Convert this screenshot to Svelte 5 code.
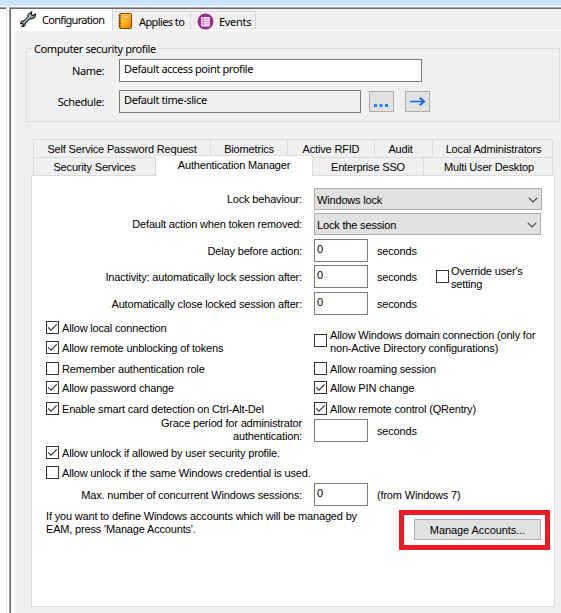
<script lang="ts">
  interface Check {
    label: string;
    checked: boolean;
    cls: string;
  }

  interface Delay {
    label: string;
    value: string;
    cls: string;
  }

  const upperTabs = [
    { label: 'Self Service Password Request', cls: 'self-service' },
    { label: 'Biometrics', cls: 'biometrics' },
    { label: 'Active RFID', cls: 'rfid' },
    { label: 'Audit', cls: 'audit' },
    { label: 'Local Administrators', cls: 'local-admin' }
  ];

  const lowerTabs = [
    { label: 'Security Services', cls: 'security' },
    { label: 'Authentication Manager', cls: 'active' },
    { label: 'Enterprise SSO', cls: 'sso' },
    { label: 'Multi User Desktop', cls: 'desktop' }
  ];

  const selects = [
    { label: 'Lock behaviour:', value: 'Windows lock', cls: 'behaviour' },
    { label: 'Default action when token removed:', value: 'Lock the session', cls: 'removed' }
  ];

  let delays: Delay[] = $state([
    { label: 'Delay before action:', value: '0', cls: 'delay' },
    { label: 'Inactivity: automatically lock session after:', value: '0', cls: 'inactivity' },
    { label: 'Automatically close locked session after:', value: '0', cls: 'close' }
  ]);

  let leftChecks: Check[] = $state([
    { label: 'Allow local connection', checked: true, cls: 'local' },
    { label: 'Allow remote unblocking of tokens', checked: true, cls: 'unblock' },
    { label: 'Remember authentication role', checked: false, cls: 'role' },
    { label: 'Allow password change', checked: true, cls: 'password' },
    { label: 'Enable smart card detection on Ctrl-Alt-Del', checked: true, cls: 'smart' }
  ]);

  let rightChecks: Check[] = $state([
    { label: 'Allow Windows domain connection (only for\nnon-Active Directory configurations)', checked: false, cls: 'domain' },
    { label: 'Allow roaming session', checked: false, cls: 'roaming' },
    { label: 'Allow PIN change', checked: true, cls: 'pin' },
    { label: 'Allow remote control (QRentry)', checked: true, cls: 'remote' }
  ]);

  let unlockChecks: Check[] = $state([
    { label: 'Allow unlock if allowed by user security profile.', checked: true, cls: 'by-profile' },
    { label: 'Allow unlock if the same Windows credential is used.', checked: false, cls: 'by-credential' }
  ]);

  let override: Check = $state({ label: "Override user's\nsetting", checked: false, cls: 'override' });
</script>

{#snippet checkbox(item: Check)}
  <button class="check {item.cls}" role="checkbox" aria-checked={item.checked} onclick={() => (item.checked = !item.checked)}>
    <svg class="box" width="13" height="13" viewBox="0 0 13 13">
      <rect x="0.5" y="0.5" width="12" height="12" fill="#fff" stroke="#333" />
      {#if item.checked}
        <path d="M2.2 6.3 L5 9.1 L10.8 3.3" fill="none" stroke="#333" stroke-width="1.2" />
      {/if}
    </svg>
    <span class="check-label">{item.label}</span>
  </button>
{/snippet}

<div class="window">
  <div class="side"></div>
  <main class="pane">
    <nav class="main-tabs">
      <div class="main-tab current">
        <svg class="wrench" width="17" height="17" viewBox="0 0 17 17">
          <path d="M9.3 2.6 L11.6 0.8 L11.2 3.6 L12.8 4.6 L15.4 3 C15.9 5.7 14 8 11.3 7.6 L9.6 7.8 L5.2 12.3 C5.4 14.3 3.7 15.8 1.9 15.4 L3.4 13.5 L2.6 12.3 L0.6 12.6 C0.8 10.5 2.4 9.5 4 9.9 L8 6.2 C7.6 4.7 8 3.4 9.3 2.6 Z" fill="#8fa3ad" stroke="#20272b" stroke-width="1.2" />
          <path d="M4.2 11.2 L9.4 6 M9.8 3.6 L9.6 5.6" stroke="#e4edf1" stroke-width="1" />
        </svg>
        <span>Configuration</span>
      </div>
      <div class="main-tab applies">
        <svg width="14" height="16" viewBox="0 0 14 16">
          <defs>
            <linearGradient id="cover" x1="0" y1="0" x2="1" y2="1">
              <stop offset="0" stop-color="#ffe05a" />
              <stop offset="0.5" stop-color="#ffb81c" />
              <stop offset="1" stop-color="#ee7200" />
            </linearGradient>
          </defs>
          <rect x="1.5" y="0.5" width="12" height="15" rx="1" fill="url(#cover)" stroke="#8a3d00" />
          <rect x="5" y="3" width="6" height="2" fill="#fff8d8" stroke="#d48a1a" stroke-width="0.8" />
          <path d="M2.8 1 V15" stroke="#c86400" stroke-width="0.8" />
          <path d="M0.4 2.5 H3 M0.4 5.2 H3 M0.4 7.9 H3 M0.4 10.6 H3 M0.4 13.3 H3" stroke="#6b6257" stroke-width="1" />
        </svg>
        <span>Applies to</span>
      </div>
      <div class="main-tab events">
        <svg width="17" height="17" viewBox="0 0 17 17">
          <circle cx="8.5" cy="8.5" r="8" fill="#9b2d8d" />
          <rect x="4" y="4" width="9" height="9.4" rx="0.8" fill="#f7e6f5" />
          <path d="M4 6.3 H13 M4 8.6 H13 M4 10.9 H13" stroke="#c07ab6" stroke-width="0.8" />
          <path d="M6.3 4 V13" stroke="#c07ab6" stroke-width="0.8" />
        </svg>
        <span>Events</span>
      </div>
    </nav>

    <div class="page">
      <fieldset class="profile">
        <legend>Computer security profile</legend>
        <div class="profile-row">
          <label for="name">Name:</label>
          <input id="name" value="Default access point profile" />
        </div>
        <div class="profile-row">
          <label for="schedule">Schedule:</label>
          <input id="schedule" class="readonly" value="Default time-slice" readonly />
          <button class="tool" aria-label="Browse">
            <svg width="23" height="19" viewBox="0 0 23 19">
              <path d="M4 13.5 H7 M9.5 13.5 H12.5 M15 13.5 H18" stroke="#1a82ff" stroke-width="3" />
            </svg>
          </button>
          <button class="tool" aria-label="Go to">
            <svg width="23" height="19" viewBox="0 0 23 19">
              <path d="M4 9.5 H17" stroke="#0f62ff" stroke-width="1.5" />
              <path d="M13.8 5.8 L18 9.5 L13.8 13.2" fill="none" stroke="#0f62ff" stroke-width="2" />
            </svg>
          </button>
        </div>
      </fieldset>

      <div class="tab-row upper">
        {#each upperTabs as tab}
          <div class="tab {tab.cls}"><span>{tab.label}</span></div>
        {/each}
      </div>
      <div class="tab-row lower">
        {#each lowerTabs as tab}
          <div class="tab {tab.cls}"><span>{tab.label}</span></div>
        {/each}
      </div>

      <section class="panel">
        {#each selects as item}
          <div class="row {item.cls}">
            <span class="label">{item.label}</span>
            <div class="select">
              <span>{item.value}</span>
              <svg width="10" height="6" viewBox="0 0 10 6">
                <path d="M0.8 0.8 L5 5 L9.2 0.8" fill="none" stroke="#444" stroke-width="1.2" />
              </svg>
            </div>
          </div>
        {/each}

        {#each delays as item}
          <div class="row {item.cls}">
            <span class="label">{item.label}</span>
            <input class="number" bind:value={item.value} />
            <span class="unit">seconds</span>
            {#if item.cls === 'inactivity'}
              {@render checkbox(override)}
            {/if}
          </div>
        {/each}

        <div class="checks">
          <div class="column">
            {#each leftChecks as item}
              {@render checkbox(item)}
            {/each}
          </div>
          <div class="column">
            {#each rightChecks as item}
              {@render checkbox(item)}
            {/each}
          </div>
        </div>

        <div class="row grace">
          <span class="label">Grace period for administrator<br />authentication:</span>
          <input class="number" value="" />
          <span class="unit">seconds</span>
        </div>

        <div class="column unlocks">
          {#each unlockChecks as item}
            {@render checkbox(item)}
          {/each}
        </div>

        <div class="row sessions">
          <span class="label">Max. number of concurrent Windows sessions:</span>
          <input class="number" value="0" />
          <span class="unit windows">(from Windows 7)</span>
        </div>

        <div class="footer">
          <p>If you want to define Windows accounts which will be managed by<br />EAM, press 'Manage Accounts'.</p>
          <div class="highlight">
            <button class="manage">Manage Accounts...</button>
          </div>
        </div>
      </section>
    </div>
  </main>
</div>

<style>
  :global(body) {
    background: #fff;
    overflow: hidden;
  }

  * {
    box-sizing: border-box;
  }

  .window {
    display: flex;
    width: 561px;
    height: 613px;
    border-top: 6px solid #cce4ff;
    font-family: "Liberation Sans", Arial, sans-serif;
    font-size: 11px;
    line-height: 13px;
    letter-spacing: -0.17px;
    color: #000;
    white-space: nowrap;
  }

  button {
    font: inherit;
    letter-spacing: inherit;
    color: inherit;
  }

  input {
    display: block;
    margin: 0;
    border: 1px solid #7a7a7a;
    background: #fff;
    font: inherit;
    letter-spacing: inherit;
    color: inherit;
    outline: none;
  }

  .side {
    width: 7px;
    margin: 1px 2px 0 0;
    border-top: 1px solid #a0a0a0;
    border-right: 1px solid #e3e3e3;
    box-shadow: inset 0 1px 0 #696969;
  }

  .pane {
    flex: 1;
    margin-top: 1px;
    padding: 1px 0 0 1px;
    border-top: 1px solid #a0a0a0;
    border-left: 1px solid #a0a0a0;
    background: #f0f0f0;
    box-shadow: inset 1px 1px 0 #696969, inset 3px 0 0 #fff;
  }

  .main-tabs {
    display: flex;
    align-items: flex-end;
    height: 21px;
    margin-left: 2px;
    font-family: "Noto Sans", "Open Sans", sans-serif;
    letter-spacing: -0.3px;
  }

  .main-tab {
    display: flex;
    align-items: center;
    height: 19px;
    border: 1px solid #d9d9d9;
    border-width: 1px 1px 0 0;
    background: #f0f0f0;
  }

  .current {
    width: 100px;
    height: 21px;
    padding: 0 0 0 7px;
    gap: 5px;
    border: 0;
    border-right: 1px solid #d9d9d9;
    background: #fff;
    letter-spacing: -0.7px;
  }

  .applies {
    width: 78px;
    padding-left: 5px;
    gap: 7px;
    letter-spacing: -0.6px;
  }

  .events {
    width: 65px;
    padding-left: 6px;
    gap: 5px;
  }

  .page {
    height: 583px;
    margin-left: 2px;
    padding: 11px 0 0 13px;
    border-top: 1px solid #fff;
    border-left: 2px solid #fff;
  }

  .profile {
    width: 534px;
    height: 80px;
    margin: 0 0 17px -2px;
    padding: 4px 0 0;
    border: 1px solid #dcdcdc;
    font-family: "Noto Sans", "Open Sans", sans-serif;
    letter-spacing: -0.4px;
  }

  legend {
    height: 13px;
    margin-left: 5px;
    padding: 0 2px;
  }

  .profile-row {
    display: flex;
    align-items: center;
    height: 23px;
    margin-bottom: 8px;
  }

  .profile-row label {
    width: 77px;
    margin-right: 15px;
    text-align: right;
  }

  .profile-row input {
    width: 303px;
    height: 23px;
    padding: 0 4px 4px;
  }

  .profile-row .readonly {
    width: 242px;
    margin-right: 8px;
    background: #f0f0f0;
  }

  .tool {
    display: block;
    width: 25px;
    height: 21px;
    margin-right: 11px;
    padding: 0;
    border: 1px solid #adadad;
    background: #e1e1e1;
  }

  .tool svg {
    display: block;
  }

  .tab-row {
    display: flex;
    width: 520px;
    height: 18px;
    margin-left: 5px;
    border-left: 1px solid #dcdcdc;
  }

  .tab {
    height: 18px;
    padding-top: 3px;
    border: 1px solid #dcdcdc;
    border-width: 1px 1px 0 0;
    text-align: center;
  }

  .self-service {
    width: 177px;
  }

  .biometrics {
    width: 77px;
  }

  .rfid {
    width: 87px;
  }

  .audit {
    width: 58px;
    padding-right: 6px;
  }

  .local-admin {
    width: 120px;
    padding-left: 2px;
  }

  .security {
    width: 122px;
  }

  .active {
    position: relative;
    width: 157px;
    height: 21px;
    margin-top: -2px;
    background: #fff;
  }

  .sso {
    width: 111px;
  }

  .desktop {
    width: 129px;
    padding-left: 2px;
  }

  .panel {
    width: 524px;
    height: 432px;
    margin-left: 3px;
    padding: 12px 0 0 14px;
    border: 1px solid #dcdcdc;
    background: #fff;
  }

  .row {
    display: flex;
    align-items: center;
    height: 23px;
  }

  .label {
    width: 256px;
    margin-right: 12px;
    padding-top: 1px;
    text-align: right;
  }

  .behaviour,
  .removed {
    height: 22px;
  }

  .behaviour,
  .delay {
    margin-bottom: 3px;
  }

  .removed,
  .inactivity {
    margin-bottom: 4px;
  }

  .close {
    margin-bottom: 6px;
  }

  .grace .label {
    margin-top: -2px;
  }

  .select {
    display: flex;
    align-items: center;
    justify-content: space-between;
    width: 227px;
    height: 22px;
    padding: 2px 3px 0 2px;
    border: 1px solid #adadad;
    background: #e1e1e1;
  }

  .behaviour .select {
    width: 228px;
  }

  .number {
    width: 54px;
    height: 23px;
    padding: 0 2px 3px;
  }

  .unit {
    width: 59px;
    margin-left: 9px;
    padding-top: 1px;
  }

  .check {
    display: flex;
    align-items: center;
    height: 13px;
    padding: 0;
    border: 0;
    background: none;
    text-align: left;
    white-space: pre;
  }

  .check-label {
    padding-top: 2px;
  }

  .box {
    display: block;
    flex: none;
    margin-right: 3px;
  }

  .override .box {
    margin-right: 2px;
  }

  .checks {
    display: flex;
    height: 98px;
  }

  .column {
    display: flex;
    flex: none;
    flex-direction: column;
    align-items: flex-start;
    width: 268px;
  }

  .local {
    margin-bottom: 7px;
  }

  .unblock,
  .password {
    margin-bottom: 8px;
  }

  .role {
    margin-bottom: 6px;
  }

  .domain {
    margin: 13px 0 15px;
  }

  .roaming {
    margin-bottom: 6px;
  }

  .pin {
    margin-bottom: 8px;
  }

  .unlocks {
    height: 37px;
    margin-top: 4px;
  }

  .by-profile {
    margin-bottom: 7px;
  }

  .footer {
    display: flex;
    margin-top: 4px;
  }

  .footer p {
    width: 353px;
    margin: 0;
  }

  .highlight {
    width: 151px;
    height: 40px;
    padding: 4px 0 0 10px;
    border: 5px solid #ed1c24;
  }

  .manage {
    display: block;
    width: 127px;
    height: 21px;
    padding: 1px 0 0;
    border: 1px solid #adadad;
    background: #e1e1e1;
    letter-spacing: -0.07px;
  }
</style>
